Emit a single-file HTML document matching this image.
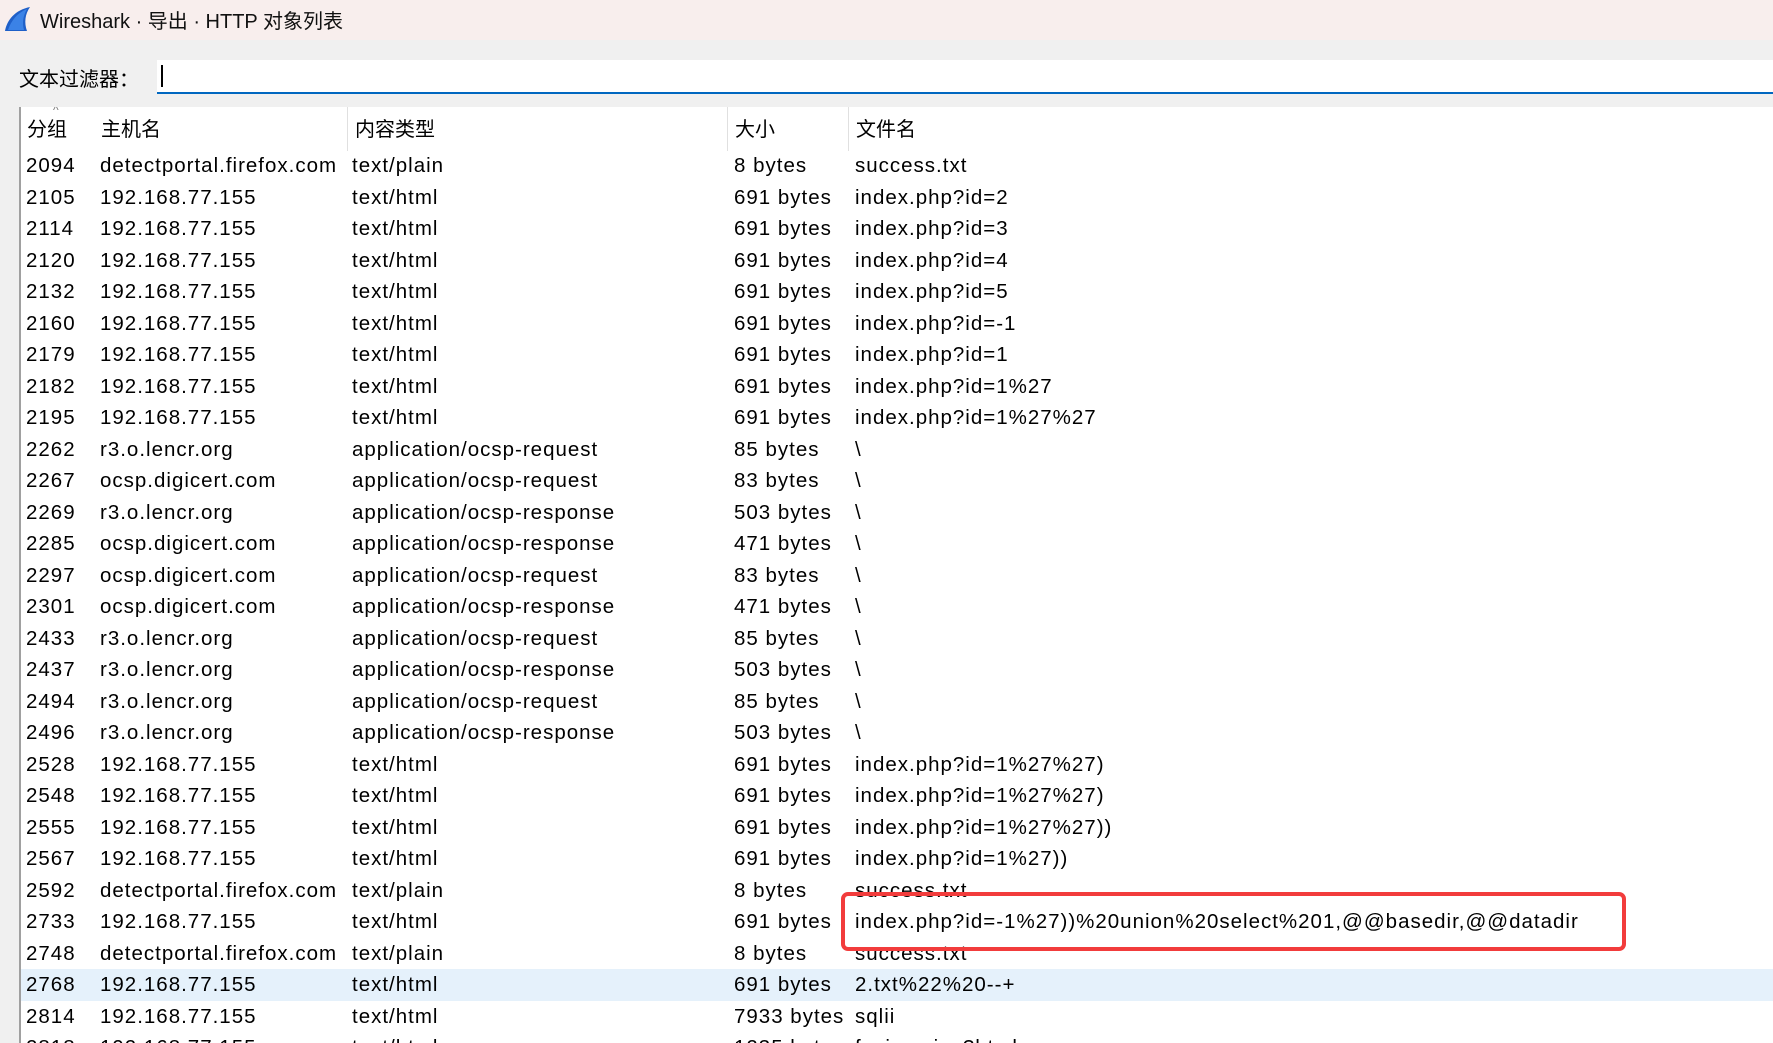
<!DOCTYPE html>
<html><head><meta charset="utf-8"><style>
*{margin:0;padding:0;box-sizing:border-box}
html{width:1773px;height:1043px;overflow:hidden}
body{width:1773px;height:1043px;overflow:hidden;background:#f0f0f0;font-family:"Liberation Sans","Noto Sans CJK SC",sans-serif;color:#000;position:relative}
.title{position:absolute;left:0;top:0;width:1773px;height:40px;background:#f8eeed}
.title span{position:absolute;left:40px;top:5px;font-size:20px;color:#111}
.flabel{position:absolute;left:19px;top:63px;font-size:20px}
.input{position:absolute;left:157px;top:60px;width:1616px;height:34px;background:#fff;border-bottom:2px solid #0067c0}
.caret{position:absolute;left:4px;top:5px;width:2px;height:22px;background:#000}
.table{position:absolute;left:19px;top:107px;width:1754px;height:936px;background:#fff;border-left:2px solid #a0a0a0;overflow:hidden}
.c{position:absolute;font-size:20px;white-space:nowrap;line-height:30px}
.d{font-size:20.5px;letter-spacing:1px}
.sep{position:absolute;top:0;width:1px;height:44px;background:#e0e0e0}
.hl{position:absolute;left:0;width:1754px;height:32px;background:#e5f1fb}
.red{position:absolute;left:841px;top:892px;width:785px;height:59px;border:4px solid #f23c3c;border-radius:7px}
</style></head><body>
<div class="title">
<svg style="position:absolute;left:3px;top:6px" width="28" height="26" viewBox="0 0 28 26"><path d="M2 25 C4 14 12 4 27 1 C22 8 21 17 24 25 Z" fill="#1f5fc8"/><path d="M5 24 C8 15 14 7 24 3 C20 10 19 17 21 24Z" fill="#3b82e6"/></svg>
<span>Wireshark · 导出 · HTTP 对象列表</span></div>
<div class="flabel">文本过滤器：</div>
<div class="input"><div class="caret"></div></div>
<div class="table" id="t">
<div class="sep" style="left:326px"></div>
<div class="sep" style="left:706px"></div>
<div class="sep" style="left:827px"></div>
<div style="position:absolute;left:32px;top:-4px;font-size:12px;color:#777">^</div>
<div class="c" style="left:6px;top:8px">分组</div>
<div class="c" style="left:80px;top:8px">主机名</div>
<div class="c" style="left:334px;top:8px">内容类型</div>
<div class="c" style="left:714px;top:8px">大小</div>
<div class="c" style="left:835px;top:8px">文件名</div>
<div class="hl" style="top:862px"></div>
</div>
<div class="red"></div>
<script>
var R=[["2094","detectportal.firefox.com","text/plain","8 bytes","success.txt"],
["2105","192.168.77.155","text/html","691 bytes","index.php?id=2"],
["2114","192.168.77.155","text/html","691 bytes","index.php?id=3"],
["2120","192.168.77.155","text/html","691 bytes","index.php?id=4"],
["2132","192.168.77.155","text/html","691 bytes","index.php?id=5"],
["2160","192.168.77.155","text/html","691 bytes","index.php?id=-1"],
["2179","192.168.77.155","text/html","691 bytes","index.php?id=1"],
["2182","192.168.77.155","text/html","691 bytes","index.php?id=1%27"],
["2195","192.168.77.155","text/html","691 bytes","index.php?id=1%27%27"],
["2262","r3.o.lencr.org","application/ocsp-request","85 bytes","\\"],
["2267","ocsp.digicert.com","application/ocsp-request","83 bytes","\\"],
["2269","r3.o.lencr.org","application/ocsp-response","503 bytes","\\"],
["2285","ocsp.digicert.com","application/ocsp-response","471 bytes","\\"],
["2297","ocsp.digicert.com","application/ocsp-request","83 bytes","\\"],
["2301","ocsp.digicert.com","application/ocsp-response","471 bytes","\\"],
["2433","r3.o.lencr.org","application/ocsp-request","85 bytes","\\"],
["2437","r3.o.lencr.org","application/ocsp-response","503 bytes","\\"],
["2494","r3.o.lencr.org","application/ocsp-request","85 bytes","\\"],
["2496","r3.o.lencr.org","application/ocsp-response","503 bytes","\\"],
["2528","192.168.77.155","text/html","691 bytes","index.php?id=1%27%27)"],
["2548","192.168.77.155","text/html","691 bytes","index.php?id=1%27%27)"],
["2555","192.168.77.155","text/html","691 bytes","index.php?id=1%27%27))"],
["2567","192.168.77.155","text/html","691 bytes","index.php?id=1%27))"],
["2592","detectportal.firefox.com","text/plain","8 bytes","success.txt"],
["2733","192.168.77.155","text/html","691 bytes","index.php?id=-1%27))%20union%20select%201,@@basedir,@@datadir"],
["2748","detectportal.firefox.com","text/plain","8 bytes","success.txt"],
["2768","192.168.77.155","text/html","691 bytes","2.txt%22%20--+"],
["2814","192.168.77.155","text/html","7933 bytes","sqlii"],
["2818","192.168.77.155","text/html","1235 bytes","favicon.ico?html"]];
var X=[5,79,331,713,834],t=document.getElementById('t'),h='';
for(var i=0;i<R.length;i++){var y=(44+i*31.5).toFixed(1);for(var j=0;j<5;j++){h+='<div class="c d" style="left:'+X[j]+'px;top:'+y+'px">'+R[i][j].replace(/&/g,'&amp;')+'</div>';}}
t.insertAdjacentHTML('beforeend',h);
</script>
</body></html>
